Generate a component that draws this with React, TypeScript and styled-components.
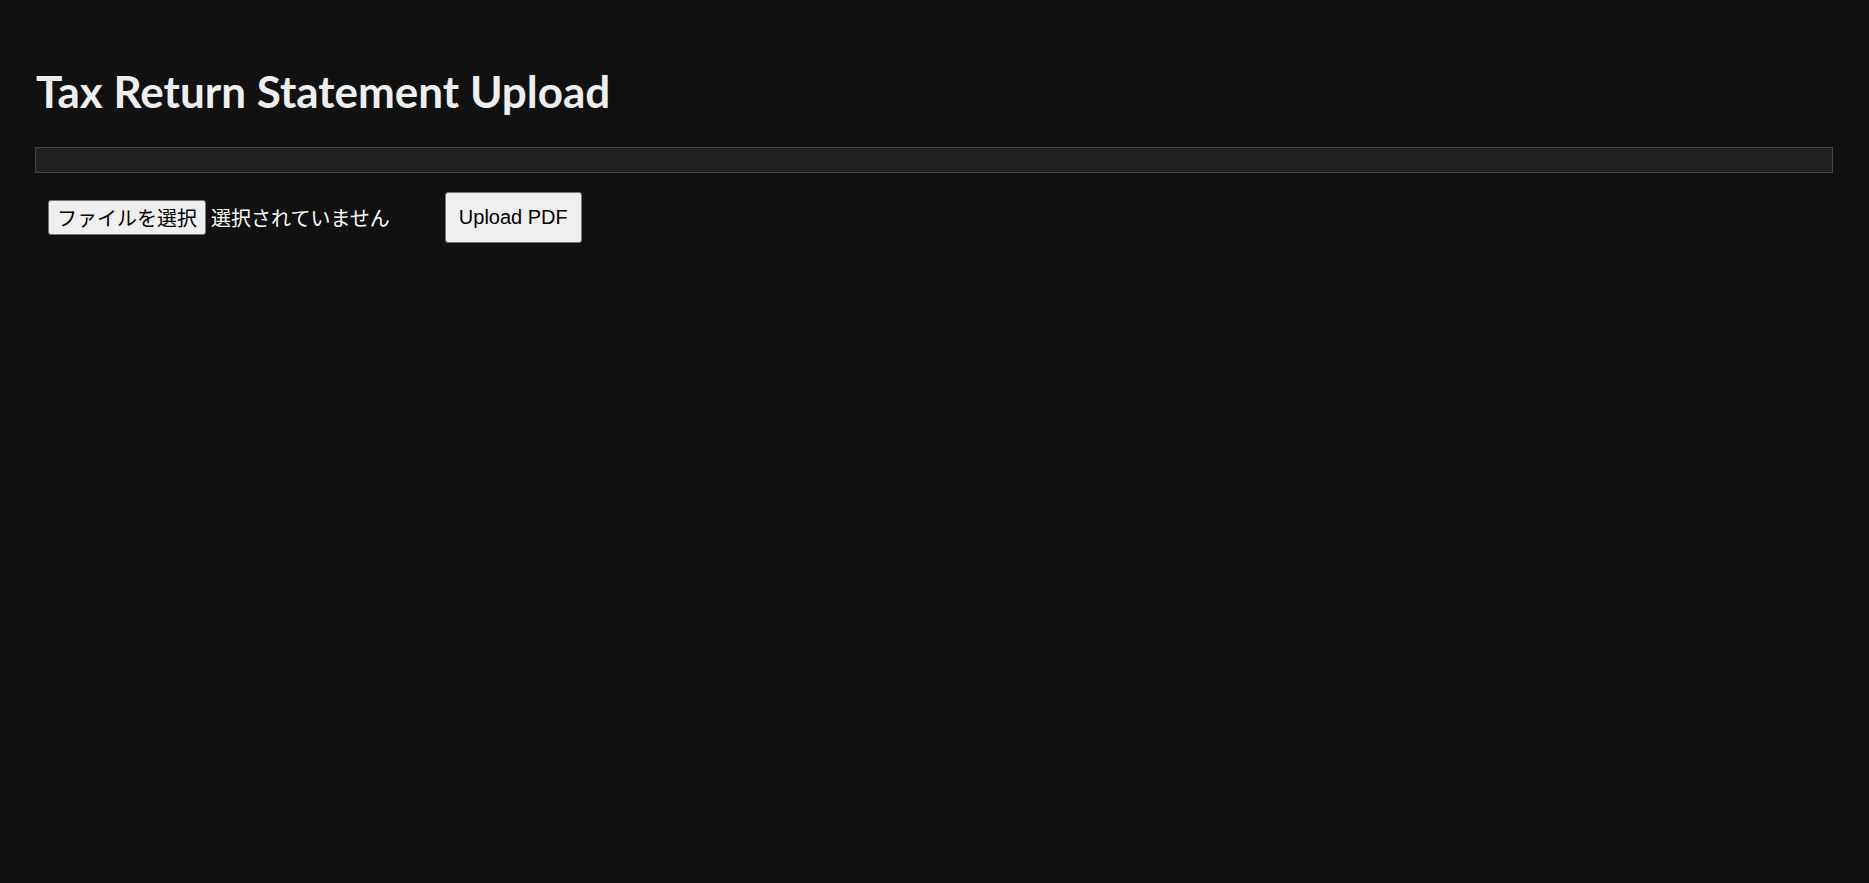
import { FC, useRef, useState } from 'react';
import styled, { createGlobalStyle } from 'styled-components';

const GlobalStyle = createGlobalStyle`
  html, body {
    margin: 0;
    padding: 0;
    background: #111111;
    min-height: 100%;
  }
  body {
    font-family: 'Liberation Sans', Arial, sans-serif;
  }
`;

const App: FC = () => {
  const inputRef = useRef<HTMLInputElement>(null);
  const [fileName, setFileName] = useState<string>('');

  return (
    <Page>
      <GlobalStyle />
      <Title>Tax Return Statement Upload</Title>
      <Progress />
      <UploadRow>
        <FilePicker>
          <HiddenInput
            ref={inputRef}
            type="file"
            accept="application/pdf"
            onChange={(e) => setFileName(e.target.files?.[0]?.name ?? '')}
          />
          <PickButton onClick={() => inputRef.current?.click()}>
            ファイルを選択
          </PickButton>
          <FileLabel>{fileName || '選択されていません'}</FileLabel>
        </FilePicker>
        <UploadButton>Upload PDF</UploadButton>
      </UploadRow>
    </Page>
  );
};

const Page = styled.div`
  min-height: 883px;
  box-sizing: border-box;
  padding: 64px 36px 0 35px;
  background: #111111;
`;

const Title = styled.h1`
  margin: 0 0 29px 1px;
  font-family: 'Lato', 'Noto Sans', sans-serif;
  font-weight: 700;
  font-size: 44px;
  line-height: 54px;
  color: #eeeeee;
`;

const Progress = styled.div`
  height: 24px;
  background: #222222;
  border: 1px solid #444444;
`;

const UploadRow = styled.div`
  display: flex;
  align-items: center;
  margin-top: 19px;
  padding-left: 13px;
`;

const FilePicker = styled.div`
  display: flex;
  align-items: center;
  margin-right: 55px;
  white-space: nowrap;
`;

const HiddenInput = styled.input`
  display: none;
`;

const PickButton = styled.button`
  height: 35px;
  width: 158px;
  padding: 0;
  box-sizing: border-box;
  background: #efefef;
  border: 1px solid #767676;
  border-radius: 3px;
  color: #000000;
  font-family: 'Noto Sans CJK JP', sans-serif;
  font-size: 20px;
  cursor: pointer;
`;

const FileLabel = styled.span`
  margin-left: 5px;
  color: #ffffff;
  font-family: 'Noto Sans CJK JP', sans-serif;
  font-size: 20px;
`;

const UploadButton = styled.button`
  height: 51px;
  width: 137px;
  padding: 0;
  box-sizing: border-box;
  white-space: nowrap;
  background: #efefef;
  border: 1px solid #767676;
  border-radius: 3px;
  color: #000000;
  font-family: 'Liberation Sans', Arial, sans-serif;
  font-size: 20px;
  cursor: pointer;
`;

export default App;
